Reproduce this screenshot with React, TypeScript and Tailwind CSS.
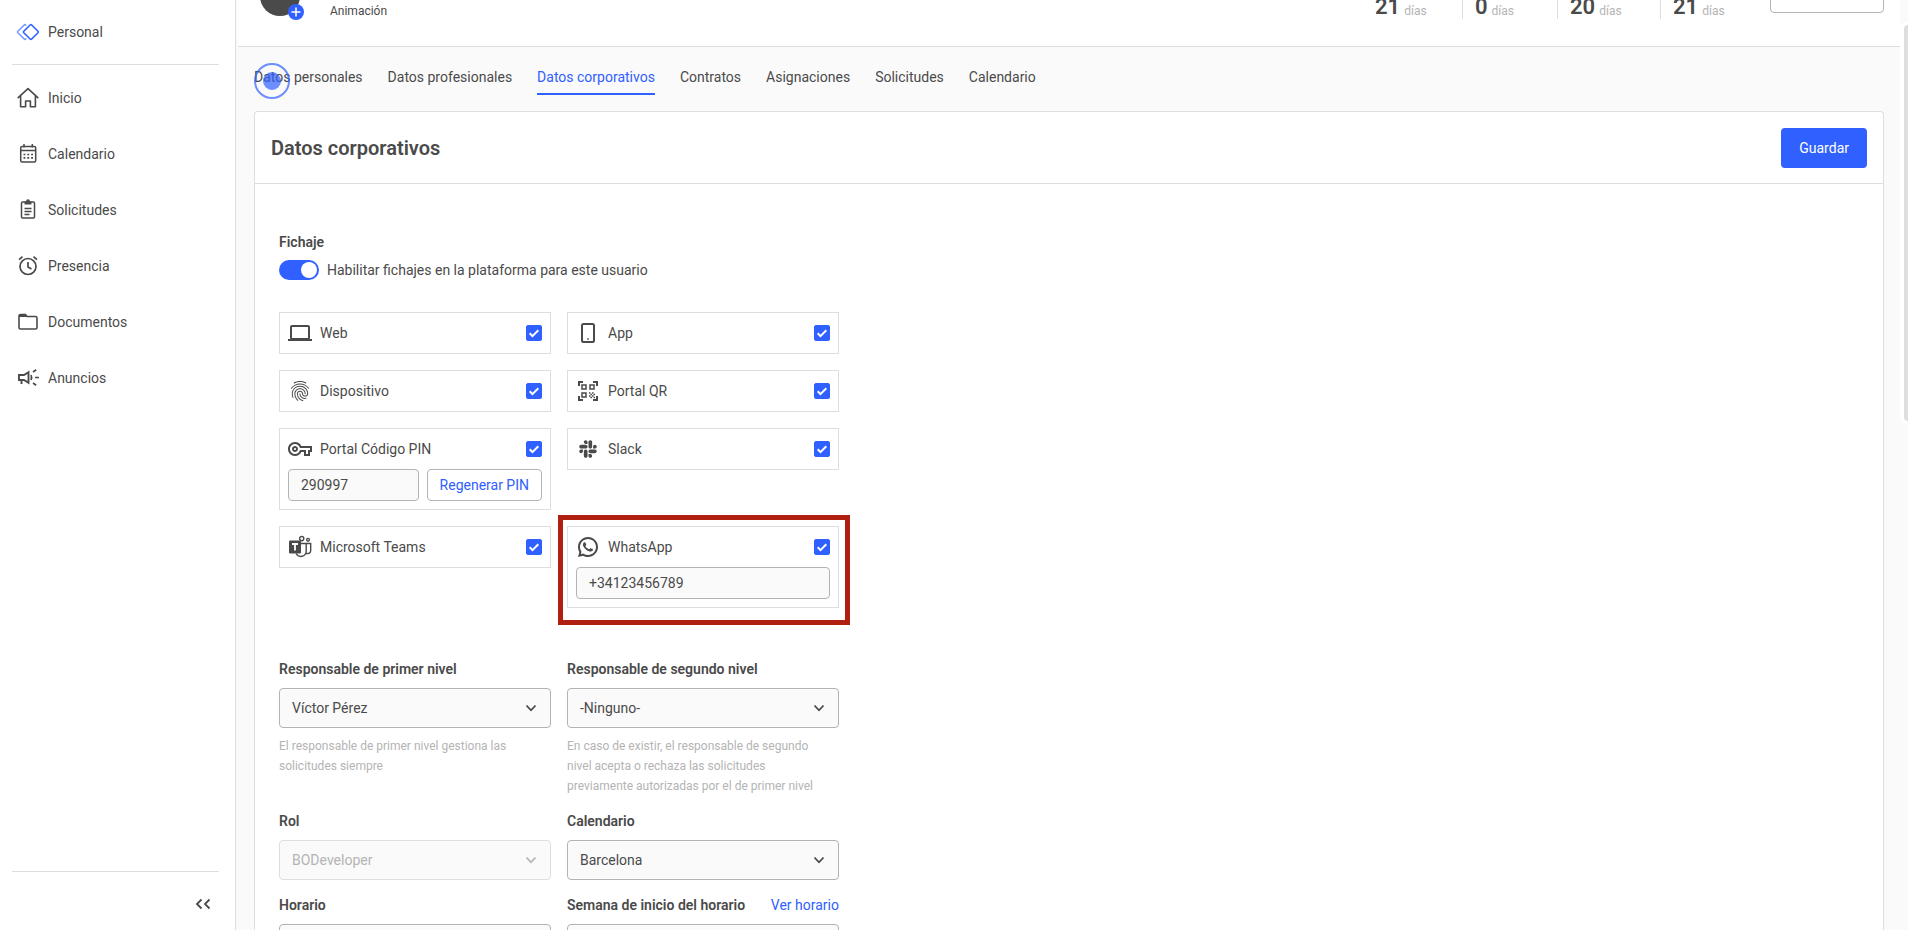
import type { ReactNode } from 'react';
import { MdFingerprint, MdOutlineVpnKey } from 'react-icons/md';
import { FaSlack } from 'react-icons/fa';
import { RiWhatsappLine } from 'react-icons/ri';

const LogoIcon = () => (
  <svg viewBox="0 0 24 24" className="size-6" fill="none" strokeLinejoin="round" aria-hidden="true">
    <path d="M10.3 5.5 9.7 5Q9 4.300 8.200 5L1.800 11.300q-.6.700 0 1.400L8.200 19q.8.700 1.500 0l.6-.5" stroke="#6f98ff" strokeWidth="1.5" />
    <path d="M7.800 11.300 14.100 5q.8-.7 1.600 0l6.300 6.300q.6.700 0 1.400L15.700 19q-.8.700-1.600 0l-6.300-6.300q-.5-.7 0-1.400Z" stroke="#3060ff" strokeWidth="1.6" />
  </svg>
);
const HomeIcon = () => (
  <svg viewBox="0 0 24 24" className="size-6" fill="none" stroke="currentColor" strokeWidth="1.6" strokeLinejoin="round" strokeLinecap="round" aria-hidden="true">
    <path d="M2.200 11.700 12 2.700l9.800 9M4.600 10v10.800h5V15h4.800v5.800h5V10" />
  </svg>
);
const CalendarIcon = () => (
  <svg viewBox="0 0 24 24" className="size-6" fill="none" stroke="currentColor" strokeWidth="1.5" aria-hidden="true">
    <rect x="4.7" y="4.5" width="15" height="15.5" rx="1.5" />
    <path d="M4.700 8.500h15M8 2v3.500M16.300 2v3.500" />
    <path d="M7.500 12.500h9.500M7.500 15.800h9.500" strokeWidth="1.7" strokeDasharray="1.9 1.9" />
  </svg>
);
const ClipboardIcon = () => (
  <svg viewBox="0 0 24 24" className="size-6" fill="none" stroke="currentColor" strokeWidth="1.5" aria-hidden="true">
    <rect x="5.5" y="4" width="13" height="16" rx="1" />
    <path d="M8.500 3.500h7v3h-7Z" fill="currentColor" stroke="none" />
    <circle cx="12" cy="3.3" r="1.2" />
    <path d="M8.500 10.500h7M8.500 13.500h7M8.500 16.500h5" />
  </svg>
);
const AlarmIcon = () => (
  <svg viewBox="0 0 24 24" className="size-6" fill="none" stroke="currentColor" strokeWidth="1.7" aria-hidden="true">
    <circle cx="12" cy="12.5" r="8" />
    <path d="M12 8v5l3.500 2M3 5.700l3.500-3M21 5.700l-3.500-3" />
  </svg>
);
const FolderIcon = () => (
  <svg viewBox="0 0 24 24" className="size-6" fill="none" stroke="currentColor" strokeWidth="1.6" aria-hidden="true">
    <path d="M3 6V17.500q0 1.500 1.500 1.500h15q1.500 0 1.500-1.500V8q0-1.500-1.500-1.500H11L9.500 4.500h-5Q3 4.500 3 6Z" />
    <path d="M3 7V5L4 4h5.500L12 7Z" fill="currentColor" stroke="none" />
  </svg>
);
const MegaphoneIcon = () => (
  <svg viewBox="0 0 24 24" className="size-6" fill="none" stroke="currentColor" strokeWidth="1.9" aria-hidden="true">
    <path d="M3 9h5l4.500-2.700v10.400L8 14H3ZM5.500 14v4" />
    <path d="M15 9q1.200 2.500 0 5M19 11.500h4M17 6l3.200-2.200M17 17l3.200 2.200" strokeWidth="1.7" />
  </svg>
);
const LaptopIcon = () => (
  <svg viewBox="0 0 24 24" className="size-6" fill="none" stroke="currentColor" aria-hidden="true">
    <rect x="3" y="5" width="18" height="13" rx="1" strokeWidth="2" />
    <path d="M0 19h24" strokeWidth="2" />
  </svg>
);
const PhoneIcon = () => (
  <svg viewBox="0 0 24 24" className="size-6" fill="none" stroke="currentColor" aria-hidden="true">
    <rect x="6" y="3" width="12" height="18" rx="1.5" strokeWidth="2" />
    <path d="M11.200 18h1.600" strokeWidth="1.4" />
  </svg>
);
const QrIcon = () => (
  <svg viewBox="0 0 24 24" className="size-6" fill="none" stroke="currentColor" aria-hidden="true">
    <path d="M3 7V3h4M17 3h4v4M21 17v4h-4M7 21H3v-4" strokeWidth="2" />
    <path d="M6 6h4v4H6ZM14 6h4v4h-4ZM6 14h4v4H6Z" strokeWidth="1.5" />
    <path d="M13 14h6M13 17h6" strokeWidth="1.5" strokeDasharray="1.5 1.5" />
    <path d="M14.500 15.500h4.500M14.500 18.500h4.500" strokeWidth="1.5" strokeDasharray="1.5 1.5" />
  </svg>
);
const TeamsIcon = () => (
  <svg viewBox="0 0 24 24" className="size-6" fill="none" stroke="currentColor" strokeWidth="1.4" aria-hidden="true">
    <circle cx="13.7" cy="3.600" r="2.1" />
    <circle cx="20" cy="4.800" r="1.400" />
    <path d="M13 8.500h5.200v8a5.300 5.300 0 0 1-10 2M18.200 8.500h4.500v7a3 3 0 0 1-4.500 2.700" />
    <rect x="1" y="5.5" width="12" height="13" rx="1.3" fill="currentColor" stroke="none" />
    <path d="M4 9h6M7 9v6.500" stroke="white" strokeWidth="1.8" />
  </svg>
);

const nav = [
  { label: 'Inicio', icon: <HomeIcon /> },
  { label: 'Calendario', icon: <CalendarIcon /> },
  { label: 'Solicitudes', icon: <ClipboardIcon /> },
  { label: 'Presencia', icon: <AlarmIcon /> },
  { label: 'Documentos', icon: <FolderIcon /> },
  { label: 'Anuncios', icon: <MegaphoneIcon /> },
];

function Sidebar() {
  return (
    <aside className="flex w-[236px] shrink-0 flex-col border-r border-[#dedede] bg-white">
      <a href="#" className="ml-4 flex h-16 items-center gap-2">
        <LogoIcon />
        Personal
      </a>
      <hr className="mr-4 ml-3 border-[#dedede]" />
      <nav className="flex flex-col gap-8 pt-[21px] pl-4">
        {nav.map((item) => (
          <a key={item.label} href="#" className="flex h-6 items-center gap-2">
            {item.icon}
            {item.label}
          </a>
        ))}
      </nav>
      <hr className="mt-auto mr-4 ml-3 border-[#dedede]" />
      <div className="flex h-[58px] justify-end pt-5 pr-5">
        <button type="button" aria-label="Contraer menú" className="size-6">
          <svg viewBox="0 0 24 24" className="size-6" fill="none" stroke="currentColor" strokeWidth="1.8">
            <path d="m10.500 7.500-4.500 4.500 4.500 4.500M18.500 7.500l-4.500 4.500 4.500 4.500" />
          </svg>
        </button>
      </div>
    </aside>
  );
}

function Stat({ value, className }: { value: string; className: string }) {
  return (
    <div className={`flex h-10 items-end gap-1 border-[#dedede] ${className}`}>
      <span className="text-[22px] leading-6 font-semibold">{value}</span>
      <span className="text-xs text-[#b4b4b4]">días</span>
    </div>
  );
}

function Header() {
  return (
    <header className="ml-0.5 flex h-[47px] shrink-0 items-end overflow-hidden border-b border-[#dedede] bg-white pr-4 pl-[22px]">
      <div className="relative mb-[30px] size-10 rounded-full bg-[#4a4a4a]">
        <button type="button" aria-label="Cambiar foto" className="absolute -right-1 -bottom-1 flex size-4 items-center justify-center rounded-full bg-[#3060ff]">
          <svg viewBox="0 0 16 16" className="size-4" stroke="white" strokeWidth="1.5">
            <path d="M8 3.500v9M3.500 8h9" />
          </svg>
        </button>
      </div>
      <p className="mb-[27px] ml-[30px] flex-1 text-xs">Animación</p>
      <div className="mb-[27px] flex">
        <Stat value="21" className="w-[87px]" />
        <Stat value="0" className="w-[95px] border-l pl-3" />
        <Stat value="20" className="w-[103px] border-l pl-3" />
        <Stat value="21" className="w-[110px] border-l pl-3" />
      </div>
      <button type="button" aria-label="Acciones" className="mb-[33px] h-10 w-[114px] rounded border border-[#b3b3b3]" />
    </header>
  );
}

const tabs = ['Datos personales', 'Datos profesionales', 'Datos corporativos', 'Contratos', 'Asignaciones', 'Solicitudes', 'Calendario'];

function Tabs() {
  return (
    <nav className="relative flex h-16 items-start gap-[25px] pt-[18px]">
      {tabs.map((tab) => (
        <a
          key={tab}
          href="#"
          className={`h-[30px] border-b-2 pt-0.5 ${tab === 'Datos corporativos' ? 'border-[#3060ff] text-[#3060ff]' : 'border-transparent'}`}
        >
          {tab}
        </a>
      ))}
      <span className="absolute top-4 left-0 flex size-9 items-center justify-center rounded-full border-2 border-[#3060ff]/70">
        <span className="size-[18px] rounded-full bg-[#3060ff]/70" />
      </span>
    </nav>
  );
}

function Method({ id, icon, label, children }: { id: string; icon: ReactNode; label: string; children?: ReactNode }) {
  return (
    <div className="flex flex-col gap-2 self-start border border-[#dedede] p-2">
      <div className="flex h-6 items-center gap-2">
        <span className="flex size-6 items-center justify-center">{icon}</span>
        <label htmlFor={id} className="flex-1">{label}</label>
        <span className="relative size-4">
          <input id={id} type="checkbox" defaultChecked className="peer block size-4 appearance-none rounded-xs border border-[#b3b3b3] checked:border-[#3060ff] checked:bg-[#3060ff]" />
          <svg viewBox="0 0 16 16" className="pointer-events-none absolute inset-0 hidden size-4 peer-checked:block" fill="none" stroke="white" strokeWidth="2">
            <path d="m3.700 8.300 2.800 2.800 5.800-5.800" />
          </svg>
        </span>
      </div>
      {children}
    </div>
  );
}

function SelectField({ id, label, value, help, disabled, action }: { id: string; label: string; value: string; help?: string; disabled?: boolean; action?: ReactNode }) {
  return (
    <div>
      <div className="flex h-5 items-center justify-between">
        <label htmlFor={id} className="font-semibold">{label}</label>
        {action}
      </div>
      <div className="relative mt-[9px]">
        <select
          id={id}
          disabled={disabled}
          className="block h-10 w-full appearance-none rounded border border-[#b3b3b3] bg-[#fafafa] px-3 opacity-100 disabled:border-[#dedede] disabled:text-[#b4b4b4]"
        >
          <option>{value}</option>
        </select>
        <svg viewBox="0 0 16 16" className={`pointer-events-none absolute top-3 right-3 size-4 ${disabled ? 'text-[#b4b4b4]' : ''}`} fill="none" stroke="currentColor" strokeWidth="1.8">
          <path d="m3.500 5.500 4.500 4.800 4.500-4.800" />
        </svg>
      </div>
      {help && <p className="mt-2 pr-3 text-xs leading-5 text-[#b4b4b4]">{help}</p>}
    </div>
  );
}

const inputClass = 'h-8 min-w-0 flex-1 rounded border border-[#b3b3b3] bg-[#fafafa] px-3';

export default function App() {
  return (
    <div className="flex h-screen overflow-hidden bg-[#fafafa] font-['Roboto',sans-serif] text-sm leading-5 text-[#4a4a4a]">
      <Sidebar />
      <div className="flex min-w-0 flex-1 flex-col">
        <Header />
        <main className="flex flex-1 flex-col pr-4 pl-[18px]">
          <Tabs />
          <section className="flex-1 rounded-t border border-b-0 border-[#dedede] bg-white">
            <div className="flex h-[72px] items-center justify-between border-b border-[#dedede] px-4">
              <h1 className="text-xl font-semibold">Datos corporativos</h1>
              <button type="button" className="h-10 rounded bg-[#3060ff] px-[18px] text-white">Guardar</button>
            </div>
            <form className="px-6 pt-12">
              <h2 className="font-semibold">Fichaje</h2>
              <label className="mt-2 flex h-5 items-center gap-2">
                <input type="checkbox" defaultChecked className="peer sr-only" />
                <span className="flex h-5 w-10 justify-end rounded-full bg-[#3060ff] p-0.5">
                  <span className="size-4 rounded-full bg-white" />
                </span>
                Habilitar fichajes en la plataforma para este usuario
              </label>

              <div className="mt-8 grid w-[560px] grid-cols-2 gap-4">
                <Method id="web" label="Web" icon={<LaptopIcon />} />
                <Method id="app" label="App" icon={<PhoneIcon />} />
                <Method id="device" label="Dispositivo" icon={<MdFingerprint className="size-6" />} />
                <Method id="qr" label="Portal QR" icon={<QrIcon />} />
                <Method id="pin" label="Portal Código PIN" icon={<MdOutlineVpnKey className="size-6" />}>
                  <div className="flex gap-2">
                    <input aria-label="Código PIN" defaultValue="290997" className={inputClass} />
                    <button type="button" className="h-8 rounded border border-[#b3b3b3] px-3 text-[#3060ff]">Regenerar PIN</button>
                  </div>
                </Method>
                <Method id="slack" label="Slack" icon={<FaSlack className="size-5" />} />
                <Method id="teams" label="Microsoft Teams" icon={<TeamsIcon />} />
                <div className="relative">
                  <Method id="whatsapp" label="WhatsApp" icon={<RiWhatsappLine className="size-6" />}>
                    <div className="flex">
                      <input aria-label="Teléfono de WhatsApp" defaultValue="+34123456789" className={inputClass} />
                    </div>
                  </Method>
                  <span className="pointer-events-none absolute -top-[11px] -right-[11px] -bottom-[17px] -left-[9px] border-[5px] border-[#b02010]" />
                </div>
              </div>

              <div className="mt-[51px] grid w-[560px] grid-cols-2 gap-x-4 gap-y-[15px]">
                <SelectField id="first" label="Responsable de primer nivel" value="Víctor Pérez" help="El responsable de primer nivel gestiona las solicitudes siempre" />
                <SelectField id="second" label="Responsable de segundo nivel" value="-Ninguno-" help="En caso de existir, el responsable de segundo nivel acepta o rechaza las solicitudes previamente autorizadas por el de primer nivel" />
                <SelectField id="role" label="Rol" value="BODeveloper" disabled />
                <SelectField id="calendar" label="Calendario" value="Barcelona" />
                <SelectField id="schedule" label="Horario" value="" />
                <SelectField id="week" label="Semana de inicio del horario" value="" action={<a href="#" className="text-[#3060ff]">Ver horario</a>} />
              </div>
            </form>
          </section>
        </main>
      </div>
      <div className="w-2 shrink-0 overflow-hidden pt-[21px]">
        <div className="h-[404px] w-4 rounded-lg border-4 border-white bg-[#dedede]" />
      </div>
    </div>
  );
}
